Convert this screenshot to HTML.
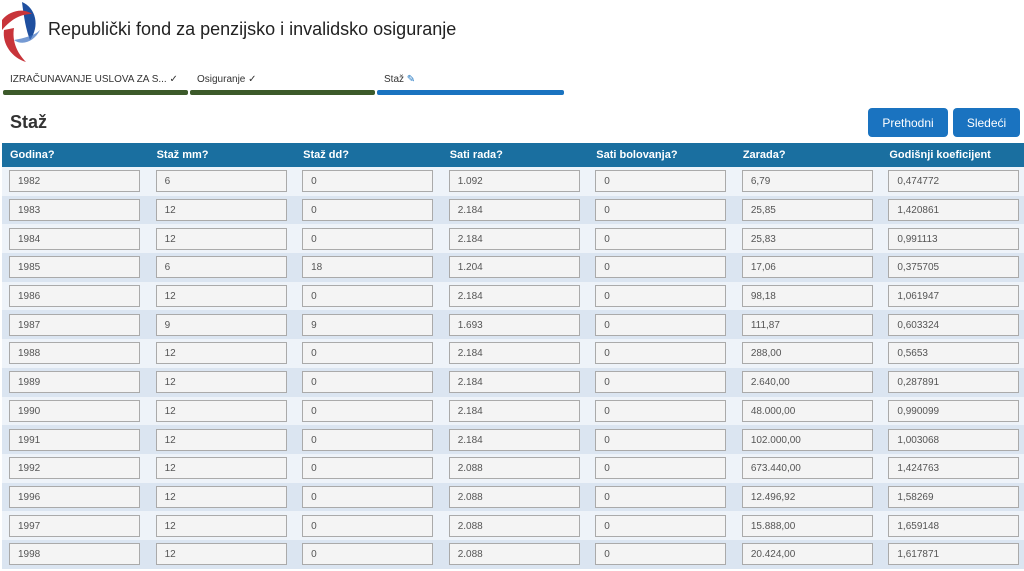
<!DOCTYPE html>
<html><head><meta charset="utf-8"><style>
*{margin:0;padding:0;box-sizing:border-box}
body{width:1024px;height:571px;overflow:hidden;background:#fff;font-family:"Liberation Sans",sans-serif;position:relative;color:#222}
.title{position:absolute;left:48px;top:19px;font-size:18px;color:#222}
.steps{position:absolute;top:74px;font-size:10px;color:#333}
.bar{position:absolute;top:90px;height:5px;border-radius:2px}
h1{position:absolute;left:10px;top:112px;font-size:18px;font-weight:bold;color:#333}
.btn{position:absolute;top:108px;height:29px;background:#1a73c0;color:#fff;font-size:12px;border-radius:4px;display:flex;align-items:center;justify-content:center}
table{position:absolute;left:2px;top:143px;width:1026px;border-collapse:collapse;table-layout:fixed}
th{background:#1a6fa0;color:#fff;font-size:11px;text-align:left;padding:0 8px;height:24px;font-weight:bold}
td{height:28.7px;padding:0 7px;vertical-align:middle}
tr:nth-child(odd) td{background:#dbe5f1}
tr:nth-child(even) td{background:#eef3f9}
.i{height:22px;border:1px solid #aaa;background:#f4f4f4;font-size:10px;color:#555;padding-left:8px;line-height:21px;width:131px}
</style></head><body>
<svg style="position:absolute;left:0;top:0" width="44" height="64" viewBox="0 0 44 64">
<path d="M22 2 C36 8 40 26 30 40 C26 30 24 18 22 2Z" fill="#1f4f9f"/>
<path d="M2 20 C10 10 24 8 32 14 C22 14 12 18 2 30Z" fill="#c8343a"/>
<path d="M4 30 C2 44 12 58 26 62 C16 52 12 40 14 28Z" fill="#c8343a"/>
<path d="M14 40 C22 46 34 42 40 30 C34 36 24 38 14 40Z" fill="#3a6fc0" opacity=".7"/>
</svg>
<div class="title">Republički fond za penzijsko i invalidsko osiguranje</div>
<div class="steps" style="left:10px">IZRAČUNAVANJE USLOVA ZA S... ✓</div>
<div class="steps" style="left:197px">Osiguranje ✓</div>
<div class="steps" style="left:384px">Staž <span style="color:#1a73c0">✎</span></div>
<div class="bar" style="left:3px;width:185px;background:#3c5a2a"></div>
<div class="bar" style="left:190px;width:185px;background:#3c5a2a"></div>
<div class="bar" style="left:377px;width:187px;background:#1a73c0"></div>
<h1>Staž</h1>
<div class="btn" style="left:868px;width:80px">Prethodni</div>
<div class="btn" style="left:953px;width:67px">Sledeći</div>
<table>
<tr><th>Godina?</th><th>Staž mm?</th><th>Staž dd?</th><th>Sati rada?</th><th>Sati bolovanja?</th><th>Zarada?</th><th>Godišnji koeficijent</th></tr>
<tr><td><div class="i">1982</div></td><td><div class="i">6</div></td><td><div class="i">0</div></td><td><div class="i">1.092</div></td><td><div class="i">0</div></td><td><div class="i">6,79</div></td><td><div class="i">0,474772</div></td></tr>
<tr><td><div class="i">1983</div></td><td><div class="i">12</div></td><td><div class="i">0</div></td><td><div class="i">2.184</div></td><td><div class="i">0</div></td><td><div class="i">25,85</div></td><td><div class="i">1,420861</div></td></tr>
<tr><td><div class="i">1984</div></td><td><div class="i">12</div></td><td><div class="i">0</div></td><td><div class="i">2.184</div></td><td><div class="i">0</div></td><td><div class="i">25,83</div></td><td><div class="i">0,991113</div></td></tr>
<tr><td><div class="i">1985</div></td><td><div class="i">6</div></td><td><div class="i">18</div></td><td><div class="i">1.204</div></td><td><div class="i">0</div></td><td><div class="i">17,06</div></td><td><div class="i">0,375705</div></td></tr>
<tr><td><div class="i">1986</div></td><td><div class="i">12</div></td><td><div class="i">0</div></td><td><div class="i">2.184</div></td><td><div class="i">0</div></td><td><div class="i">98,18</div></td><td><div class="i">1,061947</div></td></tr>
<tr><td><div class="i">1987</div></td><td><div class="i">9</div></td><td><div class="i">9</div></td><td><div class="i">1.693</div></td><td><div class="i">0</div></td><td><div class="i">111,87</div></td><td><div class="i">0,603324</div></td></tr>
<tr><td><div class="i">1988</div></td><td><div class="i">12</div></td><td><div class="i">0</div></td><td><div class="i">2.184</div></td><td><div class="i">0</div></td><td><div class="i">288,00</div></td><td><div class="i">0,5653</div></td></tr>
<tr><td><div class="i">1989</div></td><td><div class="i">12</div></td><td><div class="i">0</div></td><td><div class="i">2.184</div></td><td><div class="i">0</div></td><td><div class="i">2.640,00</div></td><td><div class="i">0,287891</div></td></tr>
<tr><td><div class="i">1990</div></td><td><div class="i">12</div></td><td><div class="i">0</div></td><td><div class="i">2.184</div></td><td><div class="i">0</div></td><td><div class="i">48.000,00</div></td><td><div class="i">0,990099</div></td></tr>
<tr><td><div class="i">1991</div></td><td><div class="i">12</div></td><td><div class="i">0</div></td><td><div class="i">2.184</div></td><td><div class="i">0</div></td><td><div class="i">102.000,00</div></td><td><div class="i">1,003068</div></td></tr>
<tr><td><div class="i">1992</div></td><td><div class="i">12</div></td><td><div class="i">0</div></td><td><div class="i">2.088</div></td><td><div class="i">0</div></td><td><div class="i">673.440,00</div></td><td><div class="i">1,424763</div></td></tr>
<tr><td><div class="i">1996</div></td><td><div class="i">12</div></td><td><div class="i">0</div></td><td><div class="i">2.088</div></td><td><div class="i">0</div></td><td><div class="i">12.496,92</div></td><td><div class="i">1,58269</div></td></tr>
<tr><td><div class="i">1997</div></td><td><div class="i">12</div></td><td><div class="i">0</div></td><td><div class="i">2.088</div></td><td><div class="i">0</div></td><td><div class="i">15.888,00</div></td><td><div class="i">1,659148</div></td></tr>
<tr><td><div class="i">1998</div></td><td><div class="i">12</div></td><td><div class="i">0</div></td><td><div class="i">2.088</div></td><td><div class="i">0</div></td><td><div class="i">20.424,00</div></td><td><div class="i">1,617871</div></td></tr>
</table>
</body></html>
